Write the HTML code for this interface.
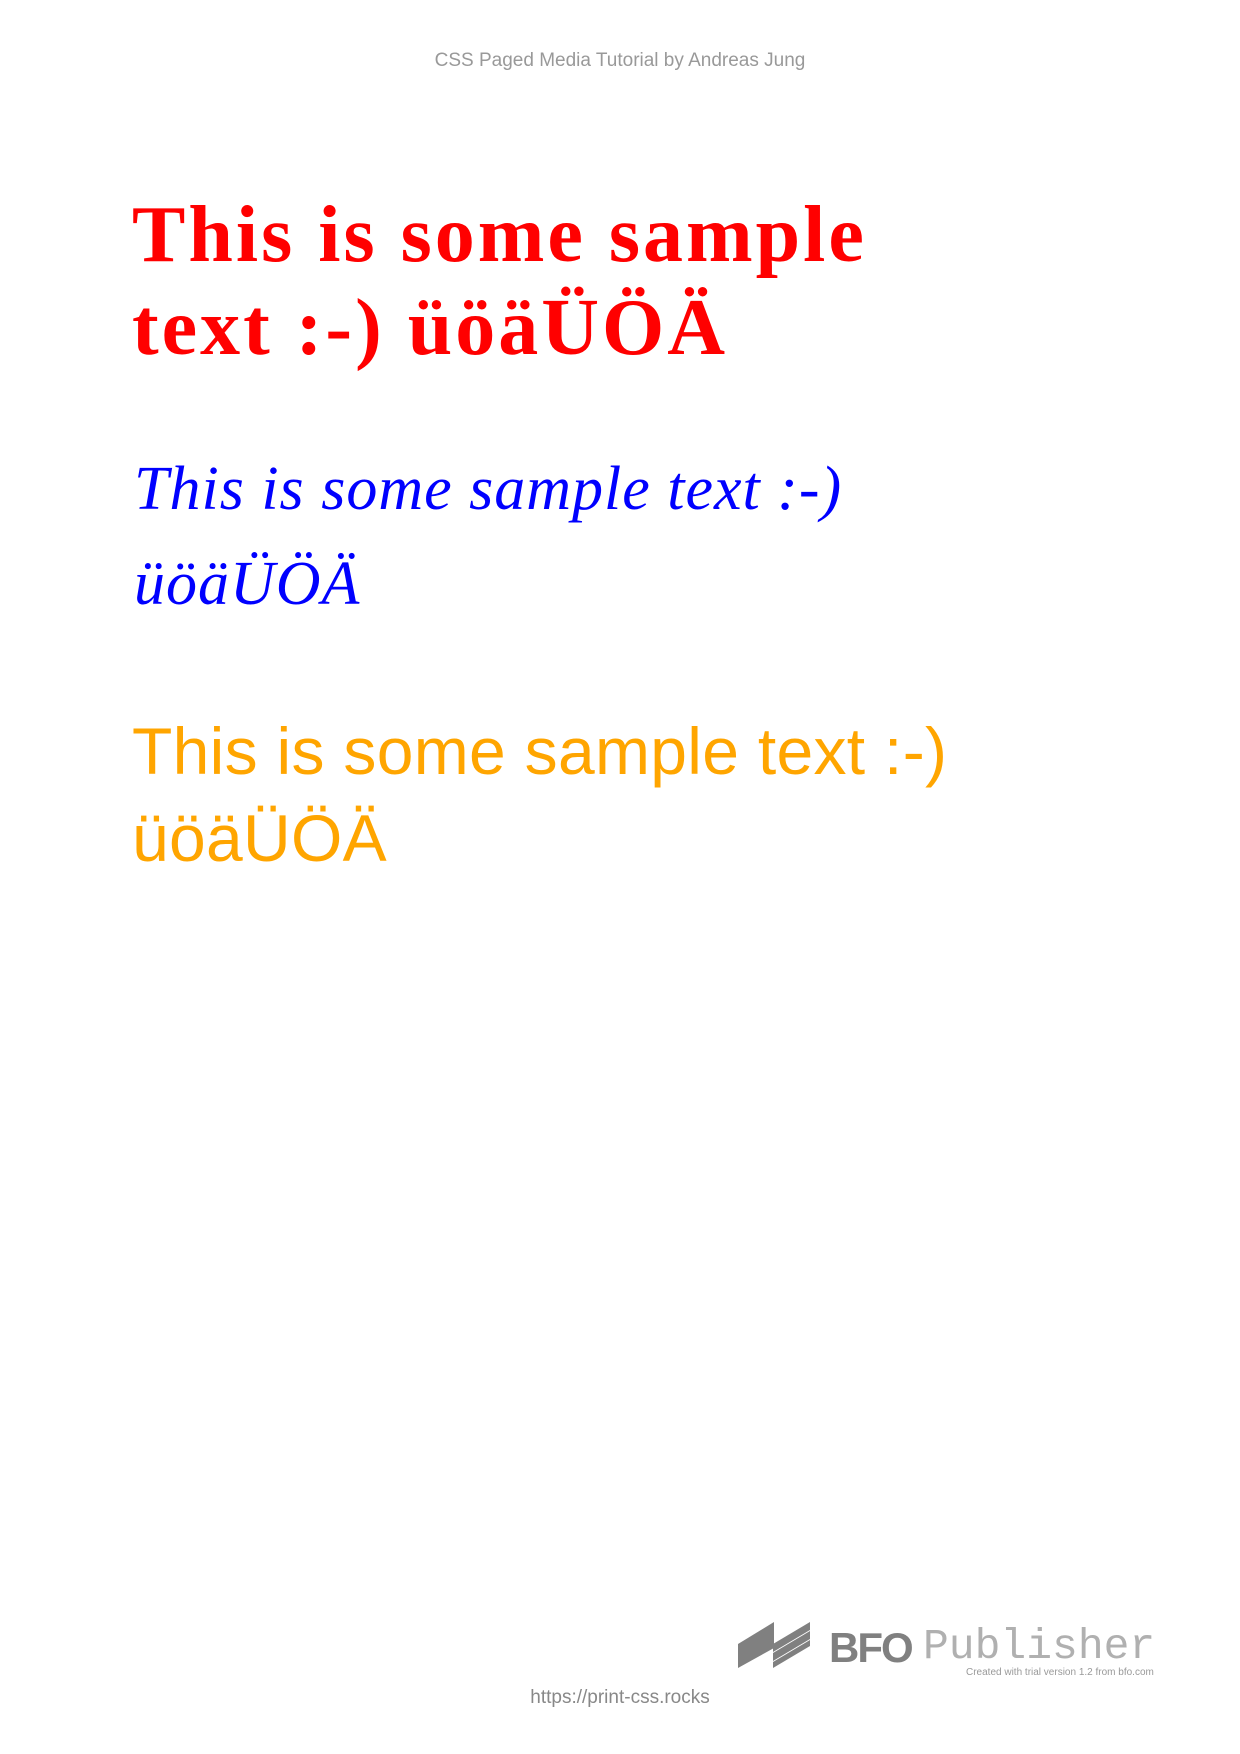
<!DOCTYPE html>
<html><head><meta charset="utf-8"><style>
html,body{margin:0;padding:0;background:#fff}
body{width:1240px;height:1754px;position:relative;overflow:hidden;font-family:"Liberation Sans",sans-serif}
.a{position:absolute;white-space:nowrap}
.hdr{top:50px;left:0;width:1240px;text-align:center;font-size:19px;color:#999}
.red{left:132px;font-family:"Liberation Serif",serif;font-weight:bold;font-size:80px;color:#f00;letter-spacing:3px;line-height:1}
.blue{left:134px;font-family:"Liberation Serif",serif;font-style:italic;font-size:62px;color:#00f;letter-spacing:1px;line-height:1}
.or{left:132px;font-size:66px;color:#ffa500;letter-spacing:0.3px;line-height:1}
.url{top:1687px;left:0;width:1240px;text-align:center;font-size:19px;color:#888}
</style></head><body>
<div class="a hdr">CSS Paged Media Tutorial by Andreas Jung</div>
<div class="a red" style="top:195px">This is some sample</div>
<div class="a red" style="top:288px">text :-) üöäÜÖÄ</div>
<div class="a blue" style="top:458px">This is some sample text :-)</div>
<div class="a blue" style="top:553px">üöäÜÖÄ</div>
<div class="a or" style="top:718px">This is some sample text :-)</div>
<div class="a or" style="top:805px">üöäÜÖÄ</div>
<svg class="a" style="left:738px;top:1622px" width="72" height="46" viewBox="0 0 72 46">
<polygon points="0,22 36,0 36,26 0,46" fill="#808080"/>
<polygon points="35,22 72,0 72,8 35,30" fill="#808080"/>
<polygon points="35,31 72,9 72,17 35,39" fill="#808080"/>
<polygon points="35,40 72,18 72,24 35,46" fill="#808080"/>
</svg>
<div class="a" style="left:829px;top:1624px;font-size:42px;font-weight:bold;color:#808080;letter-spacing:-2px">BFO</div>
<div class="a" style="left:923px;top:1622px;font-family:'Liberation Mono',monospace;font-size:43px;color:#b0b0b0">Publisher</div>
<div class="a" style="left:966px;top:1667px;font-size:10px;color:#999">Created with trial version 1.2 from bfo.com</div>
<div class="a url">https://print-css.rocks</div>
</body></html>
